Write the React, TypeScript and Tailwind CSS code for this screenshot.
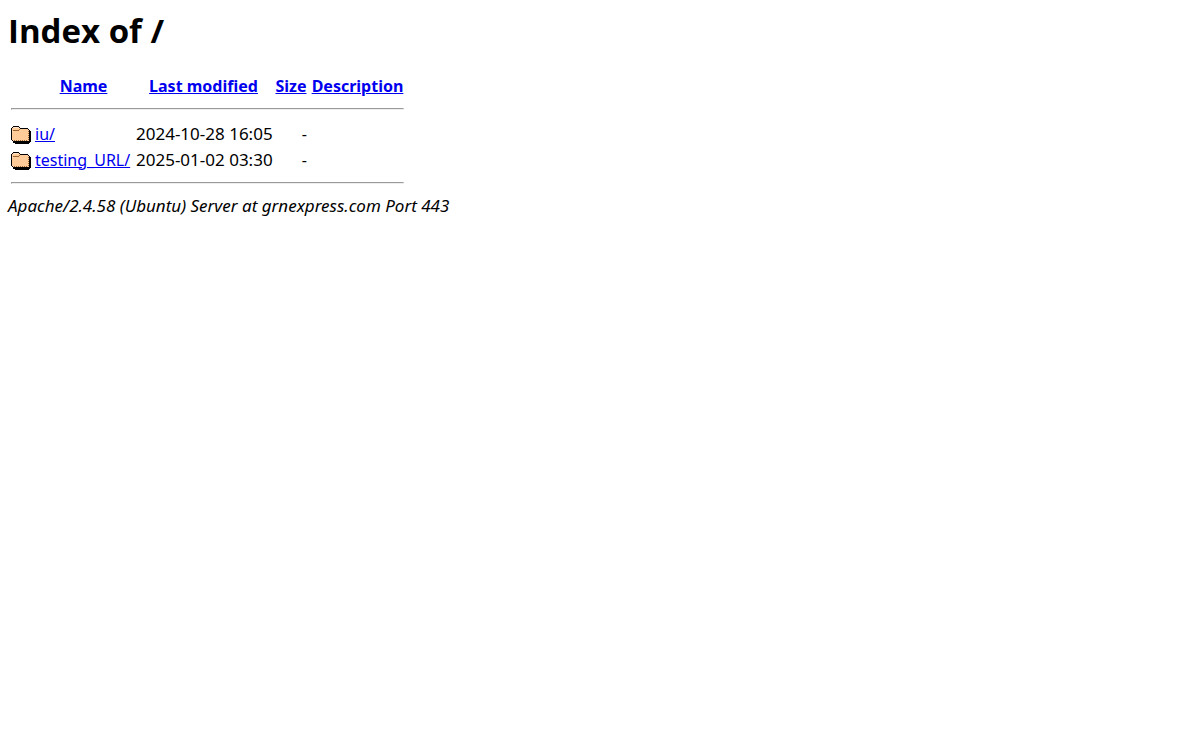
const rows = [
  { name: 'iu/', modified: '2024-10-28 16:05' },
  { name: 'testing_URL/', modified: '2025-01-02 03:30' },
]

function FolderIcon() {
  return (
    <svg
      role="img"
      aria-label="[DIR]"
      className="block h-[22px] w-5"
      viewBox="0 0 20 22"
      shapeRendering="crispEdges"
    >
      {/* shadow */}
      <path fill="#000" d="M18 6h1v1h1v11h-1v1h-1v1H4v-1H2v-1h16z" />
      {/* outline and face */}
      <path fill="#000" d="M2 2h6v1h1v1h8v1h1v1h1v11h-1v1H2v-1H1v-1H0V4h1V3h1z" />
      <path fill="#ffcc99" d="M2 3h6v1h1v1h8v1h1v11H2v-1H1V4h1z" />
      <path fill="#996633" d="M2 6h6v1H2zM8 5h1v1H8z" />
      <path fill="#ffe5cc" d="M3 3h4v1H3zM1 7h1v1H1z" />
      {/* stitched edge */}
      <path
        fill="#996633"
        d="M3 16h1v1H3zM5 16h1v1H5zM7 16h1v1H7zM9 16h1v1H9zM11 16h1v1h-1zM13 16h1v1h-1zM15 16h1v1h-1zM17 7h1v1h-1zM17 9h1v1h-1zM17 11h1v1h-1zM17 13h1v1h-1zM17 15h1v1h-1z"
      />
    </svg>
  )
}

function Rule() {
  return (
    <tr>
      <th colSpan={5} className="p-px">
        <hr className="mt-[7px] mb-[9px] h-0.5 border border-[#9a9a9a] border-r-[#eee] border-b-[#eee]" />
      </th>
    </tr>
  )
}

export default function App() {
  return (
    <main className="p-2 font-['Noto_Sans','Open_Sans',sans-serif] text-base leading-[21px] text-black">
      <h1 className="mb-5 font-['Open_Sans','Noto_Sans',sans-serif] text-[33px] leading-[45px] font-bold">Index of /</h1>
      <table className="w-[399px] table-fixed border-separate border-spacing-0.5">
        <colgroup>
          <col className="w-[22px]" />
          <col className="w-[99px]" />
          <col className="w-[137px]" />
          <col className="w-[34px]" />
          <col />
        </colgroup>
        <thead className="whitespace-nowrap text-[#0000ee]">
          <tr>
            <th className="p-px"></th>
            <th className="p-px"><a className="underline" href="?C=N;O=D">Name</a></th>
            <th className="p-px"><a className="underline" href="?C=M;O=A">Last modified</a></th>
            <th className="p-px"><a className="underline" href="?C=S;O=A">Size</a></th>
            <th className="p-px"><a className="underline" href="?C=D;O=A">Description</a></th>
          </tr>
        </thead>
        <tbody className="whitespace-nowrap">
          <Rule />
          {rows.map((row) => (
            <tr key={row.name}>
              <td className="px-px pt-0.5"><FolderIcon /></td>
              <td className="p-px"><a className="text-[#0000ee] underline" href={row.name}>{row.name}</a></td>
              <td className="px-px pb-0.5 text-[17px]">{row.modified}</td>
              <td className="p-px text-right">-</td>
              <td className="p-px">&nbsp;</td>
            </tr>
          ))}
          <Rule />
        </tbody>
      </table>
      <address className="text-[17px] leading-[19px] italic">Apache/2.4.58 (Ubuntu) Server at grnexpress.com Port 443</address>
    </main>
  )
}
